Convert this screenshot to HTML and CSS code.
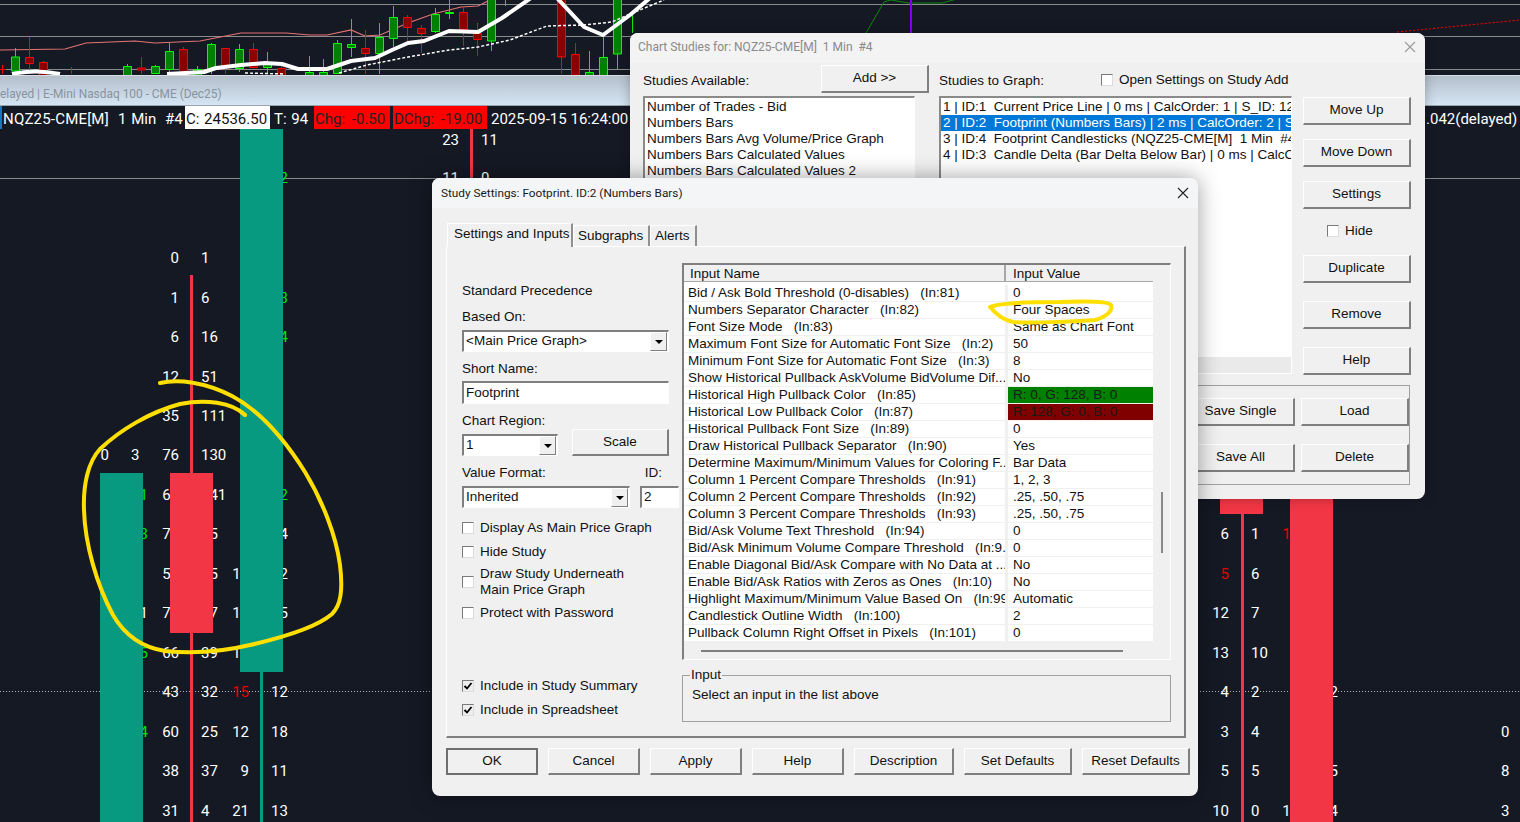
FILE: index.html
```html
<!DOCTYPE html>
<html lang="en">
<head>
<meta charset="utf-8">
<title>Study Settings</title>
<link rel="stylesheet" href="styles.css">
</head>
<body>
<div class="stage">
  <svg class="top-chart" viewBox="0 0 1520 75" width="1520" height="75">
    <path class="grid" d="M0 4.5H1520M0 36.5H1520M0 69.5H1520"/>
    <path class="pink" d="M0 50L65 49L86 43L135 41L155 43L200 41L241 33L286 33L310 35L327 35L351 30L365 36L380 35L408 23L433 14L461 7L478 6L490 0"/>
    <path class="wick-g" d="M15.5 48V72M127.5 64V74M155.5 65V74M169.5 43V74M197.5 66V74M211.5 43V74M239.5 44V72M267.5 52V74M309.5 56V74M323.5 59V74M337.5 40V74M351.5 19V57M379.5 23V74M393.5 6V47M435.5 8V33M449.5 0V19M491.5 0V51M505.5 0V6M589.5 51V74M603.5 35V74M617.5 0V69M632.5 15V33"/>
    <path class="wick-r" d="M29.5 37V74M43.5 61V74M71.5 67V74M141.5 57V74M183.5 47V74M225.5 48V74M253.5 43V68M281.5 62V74M365.5 30V74M407.5 15V42M421.5 25V53M463.5 7V46M477.5 23V56M561.5 0V74M575.5 43V74M0 69.5H6M2.5 65V74"/>
    <path class="body-g" d="M11.5 57h8v14h-8zM123.5 66.500h8v9h-8zM151.5 66.500h8v7h-8zM165.500 51.500h8v18h-8zM193.5 69.500h8v6h-8zM207.5 44.500h8v25h-8zM235.5 49.500h8v19h-8zM263.5 62.500h8v5h-8zM305.5 72.500h8v3h-8zM319.5 72.500h8v3h-8zM333.5 43.500h8v30h-8zM347.5 44.500h8v3h-8zM375.5 37.500h8v16h-8zM389.5 17.500h8v21h-8zM431.5 14.500h8v17h-8zM445.5 12.500h8v1h-8zM487.5 -2h8v43h-8zM585.500 72.500h8v3h-8zM599.5 57.500h8v18h-8zM613.5 -2h8v56h-8z"/>
    <path class="body-r" d="M25.5 57.500h8v6h-8zM39.5 62.500h8v13h-8zM137.5 68h8v2h-8zM179.5 49.500h8v26h-8zM221.5 48.500h8v19h-8zM249.5 49.500h8v18h-8zM277.5 68.500h8v7h-8zM361.500 48.500h8v5h-8zM403.5 17.500h8v10h-8zM417.5 28.500h8v5h-8zM459.5 12.500h8v17h-8zM473.5 33.500h8v6h-8zM557.5 -2h8v59h-8zM571.5 54.500h8v21h-8z"/>
    <path class="dash" d="M245 73L285 74M339 73L367 65L408 57L449 50L478 47L510 40L531 32L547 26L584 25L612 22L630 14L664 0"/>
    <path class="thick" d="M12 74Q35 69 60 74M167 74L204 72L216 68L241 65L265 63L282 64L298 69L327 69L351 61L375 58L392 50L408 43L424 41L449 31L478 32L502 18L531 -2M557 -2L584 27L603 35L630 15L650 -2"/>
    <path class="thin-g" d="M866 33L884 2L891 0L908 3L942 3L957 -1"/>
    <path class="purple" d="M911 0V33"/>
    <path class="red-dots" d="M1397 32L1520 20"/>
  </svg>

  <div class="caption">elayed | E-Mini Nasdaq 100 - CME (Dec25)</div>

  <div class="info">
    <span class="info-sym">NQZ25-CME[M]</span>
    <span class="info-int">1 Min</span>
    <span class="info-num">#4</span>
    <span class="info-close">C: 24536.50</span>
    <span class="info-t">T: 94</span>
    <span class="info-chg">Chg: -0.50</span>
    <span class="info-dchg">DChg: -19.00</span>
    <span class="info-time">2025-09-15 16:24:00</span>
    <span class="info-end">.042(delayed)</span>
  </div>

  <svg class="main-chart" viewBox="0 129 1520 693" width="1520" height="693">
    <path class="grid" d="M0 178.500H1520"/>
    <path class="dotted" d="M0 691.500H1520"/>
    <g class="nums">
      <text class="e" x="459" y="145">23</text><text x="481" y="145">11</text>
      <text class="e" x="459" y="183">11</text><text x="481" y="183">0</text>

      <text class="g" x="271" y="183">12</text>
      <text class="e" x="179" y="263">0</text><text x="201" y="263">1</text>
      <text class="e" x="179" y="303">1</text><text x="201" y="303">6</text><text class="g" x="271" y="303">13</text>
      <text class="e" x="179" y="342">6</text><text x="201" y="342">16</text><text class="g" x="271" y="342">14</text>
      <text class="e" x="179" y="382">12</text><text x="201" y="382">51</text>
      <text class="e" x="179" y="421">35</text><text x="201" y="421">111</text>
      <text class="e" x="109" y="460">0</text><text x="131" y="460">3</text><text class="e" x="179" y="460">76</text><text x="201" y="460">130</text>
      <text class="g" x="131" y="500">11</text><text class="e" x="179" y="500">66</text><text x="201" y="500">141</text><text class="g" x="271" y="500">12</text>
      <text class="g" x="131" y="539">13</text><text class="e" x="179" y="539">77</text><text x="201" y="539">35</text><text x="271" y="539">14</text>
      <text class="e" x="179" y="579">55</text><text x="201" y="579">25</text><text class="e" x="249" y="579">12</text><text x="271" y="579">12</text>
      <text x="131" y="618">11</text><text class="e" x="179" y="618">77</text><text x="201" y="618">27</text><text class="e" x="249" y="618">12</text><text x="271" y="618">15</text>
      <text class="g" x="131" y="658">15</text><text class="e" x="179" y="658">66</text><text x="201" y="658">39</text><text class="e" x="249" y="658">11</text>
      <text class="e" x="179" y="697">43</text><text x="201" y="697">32</text><text class="e rd" x="249" y="697">15</text><text x="271" y="697">12</text>
      <text class="g" x="131" y="737">14</text><text class="e" x="179" y="737">60</text><text x="201" y="737">25</text><text class="e" x="249" y="737">12</text><text x="271" y="737">18</text>
      <text class="e" x="179" y="776">38</text><text x="201" y="776">37</text><text class="e" x="249" y="776">9</text><text x="271" y="776">11</text>
      <text class="e" x="179" y="816">31</text><text x="201" y="816">4</text><text class="e" x="249" y="816">21</text><text x="271" y="816">13</text>

      <text class="e" x="1229" y="539">6</text><text x="1251" y="539">1</text><text class="e rd" x="1299" y="539">11</text>
      <text class="e rd" x="1229" y="579">5</text><text x="1251" y="579">6</text>
      <text class="e" x="1229" y="618">12</text><text x="1251" y="618">7</text>
      <text class="e" x="1229" y="658">13</text><text x="1251" y="658">10</text>
      <text class="e" x="1229" y="697">4</text><text x="1251" y="697">2</text><text x="1321" y="697">12</text>
      <text class="e" x="1229" y="737">3</text><text x="1251" y="737">4</text><text x="1501" y="737">0</text>
      <text class="e" x="1229" y="776">5</text><text x="1251" y="776">5</text><text x="1321" y="776">15</text><text x="1501" y="776">8</text>
      <text class="e" x="1229" y="816">10</text><text x="1251" y="816">0</text><text class="e" x="1299" y="816">11</text><text x="1321" y="816">14</text><text x="1501" y="816">3</text>
    </g>
    <path class="bar-r" d="M470 129h3v52h-3zM190 275h3v547h-3zM170 473h43v160h-43zM1241 514h3v308h-3zM1220 480h43v34h-43zM1290 480h43v342h-43z"/>
    <path class="bar-t" d="M100 473h43v349h-43zM240 129h43v543h-43zM260 672h3v150h-3z"/>
  </svg>

  <section class="win studies">
    <header class="studies-title"><span>Chart Studies for: NQZ25-CME[M]  1 Min  #4</span>
      <svg class="close close-gray" viewBox="0 0 12 12" width="12" height="12"><path d="M1 1L11 11M11 1L1 11"/></svg>
    </header>
    <div class="studies-body">
      <div class="avail">
        <div class="avail-head"><span>Studies Available:</span><button class="btn add">Add &gt;&gt;</button></div>
        <div class="list avail-list">
          <div>Number of Trades - Bid</div>
          <div>Numbers Bars</div>
          <div>Numbers Bars Avg Volume/Price Graph</div>
          <div>Numbers Bars Calculated Values</div>
          <div>Numbers Bars Calculated Values 2</div>
        </div>
      </div>
      <div class="graphed">
        <div class="graphed-head"><span>Studies to Graph:</span><label class="chk-row open-set"><i class="chk"></i>Open Settings on Study Add</label></div>
        <div class="list graphed-list">
          <div>1 | ID:1  Current Price Line | 0 ms | CalcOrder: 1 | S_ID: 123</div>
          <div class="sel">2 | ID:2  Footprint (Numbers Bars) | 2 ms | CalcOrder: 2 | S_ID: 1</div>
          <div>3 | ID:4  Footprint Candlesticks (NQZ25-CME[M]  1 Min  #4 Overlay)</div>
          <div>4 | ID:3  Candle Delta (Bar Delta Below Bar) | 0 ms | CalcOrder: 3</div>
        </div>
        <div class="save-group">
          <div class="save-row"><button class="btn save">Save Single</button><button class="btn load">Load</button></div>
          <div class="save-row"><button class="btn save">Save All</button><button class="btn load">Delete</button></div>
        </div>
      </div>
      <div class="side">
        <button class="btn side-btn">Move Up</button>
        <button class="btn side-btn">Move Down</button>
        <button class="btn side-btn">Settings</button>
        <label class="chk-row hide-row"><i class="chk"></i>Hide</label>
        <button class="btn side-btn">Duplicate</button>
        <button class="btn side-btn gap-18">Remove</button>
        <button class="btn side-btn gap-18">Help</button>
      </div>
    </div>
  </section>

  <section class="win study">
    <header class="study-title"><span>Study Settings: Footprint. ID:2 (Numbers Bars)</span>
      <svg class="close" viewBox="0 0 12 12" width="12" height="12"><path d="M1 1L11 11M11 1L1 11"/></svg>
    </header>
    <div class="tabs">
      <div class="tab on">Settings and Inputs</div>
      <div class="tab tab-sub">Subgraphs</div>
      <div class="tab tab-alerts">Alerts</div>
    </div>
    <div class="page">
      <div class="left">
        <div class="lbl l-std">Standard Precedence</div>
        <div class="lbl l-first">Based On:</div>
        <div class="combo c-gap5 w-full">&lt;Main Price Graph&gt;<i class="arrow"></i></div>
        <div class="lbl l-gap">Short Name:</div>
        <div class="field f-short">Footprint</div>
        <div class="lbl l-gap">Chart Region:</div>
        <div class="region"><div class="combo w-region">1<i class="arrow"></i></div><button class="btn scale">Scale</button></div>
        <div class="lbl vf-row"><span>Value Format:</span><span>ID:</span></div>
        <div class="vf"><div class="combo w-vf">Inherited<i class="arrow"></i></div><div class="field f-id">2</div></div>
        <label class="chk-row r1"><i class="chk"></i>Display As Main Price Graph</label>
        <label class="chk-row r2"><i class="chk"></i>Hide Study</label>
        <label class="chk-row r3"><i class="chk"></i><span>Draw Study Underneath<br>Main Price Graph</span></label>
        <label class="chk-row r4"><i class="chk"></i>Protect with Password</label>
        <label class="chk-row r5"><i class="chk on"><svg viewBox="0 0 10 10" width="10" height="10"><path d="M1.500 5L4 7.500L8.500 2"/></svg></i>Include in Study Summary</label>
        <label class="chk-row r2"><i class="chk on"><svg viewBox="0 0 10 10" width="10" height="10"><path d="M1.500 5L4 7.500L8.500 2"/></svg></i>Include in Spreadsheet</label>
      </div>
      <div class="right">
        <div class="tbl">
          <div class="tbl-main">
            <div class="tbl-area">
              <div class="t-head"><div class="th th-name">Input Name</div><div class="th th-val">Input Value</div></div>
              <div class="rows">
                <div class="row"><div class="nm">Bid / Ask Bold Threshold (0-disables)   (In:81)</div><div class="vl">0</div></div>
                <div class="row"><div class="nm">Numbers Separator Character   (In:82)</div><div class="vl">Four Spaces</div></div>
                <div class="row"><div class="nm">Font Size Mode   (In:83)</div><div class="vl">Same as Chart Font</div></div>
                <div class="row"><div class="nm">Maximum Font Size for Automatic Font Size   (In:2)</div><div class="vl">50</div></div>
                <div class="row"><div class="nm">Minimum Font Size for Automatic Font Size   (In:3)</div><div class="vl">8</div></div>
                <div class="row"><div class="nm">Show Historical Pullback AskVolume BidVolume Dif...</div><div class="vl">No</div></div>
                <div class="row"><div class="nm">Historical High Pullback Color   (In:85)</div><div class="vl v-green">R: 0, G: 128, B: 0</div></div>
                <div class="row"><div class="nm">Historical Low Pullback Color   (In:87)</div><div class="vl v-maroon">R: 128, G: 0, B: 0</div></div>
                <div class="row"><div class="nm">Historical Pullback Font Size   (In:89)</div><div class="vl">0</div></div>
                <div class="row"><div class="nm">Draw Historical Pullback Separator   (In:90)</div><div class="vl">Yes</div></div>
                <div class="row"><div class="nm">Determine Maximum/Minimum Values for Coloring F...</div><div class="vl">Bar Data</div></div>
                <div class="row"><div class="nm">Column 1 Percent Compare Thresholds   (In:91)</div><div class="vl">1, 2, 3</div></div>
                <div class="row"><div class="nm">Column 2 Percent Compare Thresholds   (In:92)</div><div class="vl">.25, .50, .75</div></div>
                <div class="row"><div class="nm">Column 3 Percent Compare Thresholds   (In:93)</div><div class="vl">.25, .50, .75</div></div>
                <div class="row"><div class="nm">Bid/Ask Volume Text Threshold   (In:94)</div><div class="vl">0</div></div>
                <div class="row"><div class="nm">Bid/Ask Minimum Volume Compare Threshold   (In:9...</div><div class="vl">0</div></div>
                <div class="row"><div class="nm">Enable Diagonal Bid/Ask Compare with No Data at ...</div><div class="vl">No</div></div>
                <div class="row"><div class="nm">Enable Bid/Ask Ratios with Zeros as Ones   (In:10)</div><div class="vl">No</div></div>
                <div class="row"><div class="nm">Highlight Maximum/Minimum Value Based On   (In:99)</div><div class="vl">Automatic</div></div>
                <div class="row"><div class="nm">Candlestick Outline Width   (In:100)</div><div class="vl">2</div></div>
                <div class="row"><div class="nm">Pullback Column Right Offset in Pixels   (In:101)</div><div class="vl">0</div></div>
              </div>
            </div>
            <div class="vscroll"><i class="vthumb"></i></div>
          </div>
          <div class="hscroll"></div>
        </div>
        <fieldset class="input-group">
          <legend>Input</legend>
          Select an input in the list above
        </fieldset>
      </div>
    </div>
    <div class="actions">
      <button class="btn act def">OK</button>
      <button class="btn act">Cancel</button>
      <button class="btn act">Apply</button>
      <button class="btn act">Help</button>
      <button class="btn act a-desc">Description</button>
      <button class="btn act a-set">Set Defaults</button>
      <button class="btn act a-set">Reset Defaults</button>
    </div>
  </section>

  <svg class="ink" viewBox="0 0 1520 822" width="1520" height="822">
    <path d="M160 383C178 379 205 382 232 396C262 412 285 440 305 472C322 500 336 535 340 565C343 590 341 605 332 614C318 626 285 637 250 645C225 651 195 654 165 651C140 647 124 634 113 615C97 585 85 545 84 510C83 485 88 462 100 449C120 430 150 412 180 404C205 399 232 402 245 415"/>
    <path d="M990 307C998 303 1030 302 1060 302C1085 301 1108 301 1111 305C1113 311 1106 317 1095 320C1070 322 1030 323 1013 322C1003 320 995 313 990 307"/>
  </svg>
</div>
</body>
</html>
```

FILE: styles.css
```css
* { box-sizing: border-box; }
html, body { margin: 0; padding: 0; }
body { background: #151924; overflow: hidden; }

.stage {
  position: relative;
  width: 1520px;
  height: 822px;
  overflow: hidden;
  display: flex;
  flex-direction: column;
  background: #151924;
  font-family: "Liberation Sans", Arial, sans-serif;
  font-size: 13.500px;
  color: #111;
}
.top-chart, .main-chart { display: block; flex: none; }

/* top mini chart */
.grid { stroke: #8b8b8b; stroke-width: 1; fill: none; }
.pink { stroke: #e57373; stroke-width: 1.2; fill: none; }
.wick-g { stroke: #0ee60e; stroke-width: 1; fill: none; }
.wick-r { stroke: #f00; stroke-width: 1; fill: none; }
.body-g { fill: #008000; stroke: #0f0; stroke-width: 1; }
.body-r { fill: #8b0000; stroke: #f00; stroke-width: 1; }
.dash { stroke: #fff; stroke-width: 1.5; stroke-dasharray: 3 2; fill: none; }
.thick { stroke: #fff; stroke-width: 4; fill: none; stroke-linejoin: round; }
.thin-g { stroke: #0a8a0a; stroke-width: 1; fill: none; }
.purple { stroke: #8000ff; stroke-width: 2; fill: none; }
.red-dots { stroke: #f00; stroke-width: 1; stroke-dasharray: 2 2; fill: none; }

/* caption band */
.caption {
  flex: none;
  height: 31px;
  padding-top: 10px;
  line-height: 16px;
  background: linear-gradient(#b3bfcb, #d6e5f3);
  border-top: 1px solid #d8dde2;
  border-bottom: 1px solid #9aa3ab;
  font-family: Roboto, sans-serif;
  font-size: 11.900px;
  color: #8793a0;
  white-space: nowrap;
}

/* info bar */
.info {
  flex: none;
  height: 23px;
  display: flex;
  align-items: stretch;
  line-height: 26px;
  border-left: 2px solid #1577c4;
  font-family: Roboto, sans-serif;
  font-size: 15px;
  color: #fff;
  white-space: nowrap;
}
.info-sym { width: 116px; padding-left: 1px; letter-spacing: .2px; }
.info-int { width: 47px; word-spacing: 1px; }
.info-num { width: 20px; }
.info-close { width: 85px; padding-left: 1px; background: #fff; color: #111; word-spacing: 1px; overflow: hidden; }
.info-t { width: 44px; padding-left: 4px; word-spacing: 1px; }
.info-chg { width: 76px; padding-left: 1px; background: #f00; color: #222; word-spacing: 3px; }
.info-dchg { width: 94px; margin-left: 3px; padding-left: 1px; background: #f00; color: #222; word-spacing: 3px; }
.info-time { margin-left: 4px; }
.info-end { margin-left: auto; width: 94px; }

/* main chart */
.dotted { stroke: #b5b5b5; stroke-width: 1; stroke-dasharray: 1 2; fill: none; }
.nums text { font-family: Roboto, sans-serif; font-size: 15px; fill: #fff; }
.nums .e { text-anchor: end; }
.nums .g { fill: #00e600; }
.nums .rd { fill: #e60000; }
.bar-r { fill: #f23645; }
.bar-t { fill: #089981; }

/* windows */
.win {
  position: absolute;
  background: #f0f0f0;
  border-radius: 8px;
  overflow: hidden;
  display: flex;
  flex-direction: column;
}
button { font: inherit; color: inherit; }
.btn {
  display: block;
  padding: 0 0 1px;
  background: #f0f0f0;
  border-style: solid;
  border-width: 1px 2px 2px 1px;
  border-color: #fff #7f7f7f #7f7f7f #fff;
  text-align: center;
  line-height: 22px;
  white-space: nowrap;
}

/* chart studies window */
.studies {
  left: 630px;
  top: 33px;
  width: 795px;
  height: 466px;
  box-shadow: 0 0 12px rgba(0, 0, 0, .28);
}
.studies-title {
  flex: none;
  height: 30px;
  padding: 0 9px 2px 8px;
  display: flex;
  align-items: center;
  justify-content: space-between;
  background: #f3f3f3;
  color: #8a8a8a;
  font-family: Roboto, sans-serif;
  font-size: 12px;
  white-space: pre;
}
.studies-body { display: flex; padding: 2px 0 0 13px; }
.avail { width: 296px; flex: none; }
.avail-head { display: flex; align-items: flex-start; justify-content: space-between; height: 29px; width: 286px; line-height: 16px; }
.avail-head span { margin-top: 8px; }
.add { width: 108px; height: 28px; }
.list {
  margin-top: 2px;
  background: #fff;
  border-style: solid;
  border-width: 2px 1px 1px 2px;
  border-color: #8a8a8a #fff #fff #8a8a8a;
  overflow: hidden;
  line-height: 16px;
}
.list div { white-space: pre; height: 16px; }
.avail-list { width: 272px; height: 280px; padding: 1px 0 0 2px; }
.graphed { width: 353px; flex: none; }
.graphed-head { display: flex; align-items: flex-start; height: 29px; line-height: 16px; }
.graphed-head > span { width: 162px; margin-top: 8px; }
.open-set { margin-top: 7px; }
.graphed-list { height: 278px; padding-top: 1px; background: linear-gradient(#fff 259px, #eaeaea 259px); }
.graphed-list div { padding-left: 2px; }
.graphed-list .sel { background: #0078d7; color: #fff; }
.save-group {
  margin-top: 11px;
  width: 471px;
  height: 100px;
  border: 1px solid #a0a0a0;
  padding: 12px 0 0 0;
  display: flex;
  flex-direction: column;
  gap: 18px;
}
.save-row { display: flex; justify-content: flex-end; gap: 6px; }
.save { width: 108px; height: 28px; }
.load { width: 108px; height: 28px; }
.side { margin-left: 11px; width: 108px; flex: none; padding-top: 32px; position: relative; z-index: 1; }
.side-btn { width: 108px; height: 28px; margin-bottom: 14px; }
.side .gap-18 { margin-top: 18px; margin-bottom: 0; }
.hide-row { height: 16px; padding-left: 24px; margin: 10px 0 16px; }

.chk-row { display: flex; align-items: center; line-height: 16px; white-space: nowrap; }
.chk {
  flex: none;
  display: block;
  width: 12px;
  height: 12px;
  margin-right: 6px;
  background: #fff;
  border: 1px solid;
  border-color: #7a7a7a #dcdcdc #dcdcdc #7a7a7a;
}
.chk.on { background: #eee; }
.chk svg { display: block; }
.chk path { fill: none; stroke: #000; stroke-width: 1.8; }

/* study settings window */
.study {
  left: 432px;
  top: 178px;
  width: 766px;
  height: 618px;
  box-shadow: 0 0 22px rgba(0, 0, 0, .38);
}
.study-title {
  flex: none;
  height: 30px;
  padding: 0 9px;
  display: flex;
  align-items: center;
  justify-content: space-between;
  background: #f4f5f7;
  font-family: Roboto, sans-serif;
  font-size: 11.800px;
  color: #1a1a1a;
}
.close path { stroke: #222; stroke-width: 1.100; fill: none; }
.close-gray path { stroke: #9a9a9a; }
.tabs { flex: none; display: flex; height: 23px; margin: 15px 0 0 15px; align-items: flex-end; position: relative; z-index: 1; }
.tab {
  height: 21px;
  line-height: 19px;
  padding: 0 0 0 4px;
  border-right: 2px solid #8f8f8f;
  border-left: 1px solid #fff;
  border-top: 1px solid #fff;
  white-space: nowrap;
}
.tab.on {
  width: 126px;
  height: 24px;
  margin-bottom: -1px;
  padding: 0 0 5px 6px;
  background: #f0f0f0;
}
.tab-sub { width: 77px; }
.tab-alerts { width: 47px; }
.page {
  flex: none;
  width: 740px;
  height: 492px;
  margin-left: 14px;
  border-style: solid;
  border-width: 1px 2px 2px 1px;
  border-color: #fff #7f7f7f #7f7f7f #fff;
  display: flex;
  padding-left: 15px;
}
.left { width: 220px; flex: none; }
.lbl { line-height: 16px; white-space: nowrap; }
.l-std { margin-top: 36px; }
.l-first { margin-top: 10px; }
.l-gap { margin-top: 9px; }
.combo, .field {
  position: relative;
  height: 22px;
  line-height: 18px;
  padding-left: 2px;
  background: #fff;
  border-style: solid;
  border-width: 2px 1px 1px 2px;
  border-color: #7f7f7f #fff #fff #7f7f7f;
  white-space: nowrap;
}
.c-gap5 { margin-top: 5px; }
.w-full { width: 207px; }
.arrow {
  position: absolute;
  right: 1px;
  top: 0;
  bottom: 0;
  width: 17px;
  background: #f0f0f0;
  border-style: solid;
  border-width: 1px 1px 1px 1px;
  border-color: #fff #7f7f7f #7f7f7f #fff;
}
.arrow::after {
  content: "";
  position: absolute;
  left: 4px;
  top: 7px;
  border: 4px solid transparent;
  border-top: 4px solid #000;
  border-bottom: 0;
}
.f-short { width: 207px; height: 23px; margin-top: 4px; line-height: 19px; }
.region { display: flex; align-items: flex-end; gap: 14px; height: 27px; }
.w-region { width: 96px; }
.scale { width: 97px; height: 27px; }
.vf-row { display: flex; justify-content: space-between; width: 200px; margin-top: 9px; }
.vf { display: flex; gap: 10px; margin-top: 5px; }
.w-vf { width: 168px; }
.f-id { width: 39px; }
.r1 { margin-top: 12px; }
.r2 { margin-top: 8px; }
.r3 { margin-top: 6px; }
.r4 { margin-top: 7px; }
.r5 { margin-top: 57px; }

.right { width: 489px; flex: none; margin-top: 16px; }
.tbl {
  height: 397px;
  border-style: solid;
  border-width: 2px 1px 1px 2px;
  border-color: #7f7f7f #fff #fff #7f7f7f;
}
.tbl-main { display: flex; }
.tbl-area { width: 469px; flex: none; background: #fff; }
.t-head { display: flex; height: 17px; line-height: 17px; background: #f0f0f0; border-bottom: 1px solid #a8a8a8; margin-bottom: 3px; }
.th { white-space: nowrap; }
.th-name { width: 322px; padding-left: 6px; border-right: 2px solid #a8a8a8; }
.th-val { padding-left: 7px; }
.rows { display: flex; flex-direction: column; }
.row { display: flex; height: 17px; line-height: 16px; border-bottom: 1px solid #f0f0f0; white-space: pre; }
.nm { width: 324px; padding-left: 4px; border-right: 3px solid #f0f0f0; overflow: hidden; }
.vl { flex: 1; padding-left: 5px; }
.v-green { background: #008000; color: #1a1a1a; }
.v-maroon { background: #800000; color: #1a1a1a; }
.vscroll { flex: 1; padding: 227px 0 0 8px; }
.vthumb { display: block; width: 2px; height: 61px; background: #8a8a8a; }
.hscroll { width: 422px; height: 2px; margin: 8px 0 0 17px; background: #808080; }
.input-group {
  width: 489px;
  height: 55px;
  margin: 7px 0 0;
  padding: 4px 0 0 9px;
  border: 1px solid #a0a0a0;
  line-height: 16px;
}
.input-group legend { margin-left: -2px; padding: 0 1px; line-height: 16px; }

.actions { display: flex; gap: 10px; margin: 10px 0 0 14px; }
.act { width: 92px; height: 27px; }
.a-desc { width: 100px; }
.a-set { width: 108px; }
.def { border: 2px solid #6f6f6f; }

/* yellow hand drawn marks */
.ink { position: absolute; left: 0; top: 0; pointer-events: none; }
.ink path { fill: none; stroke: #ffdf00; stroke-width: 4; stroke-linecap: round; stroke-linejoin: round; }
```
